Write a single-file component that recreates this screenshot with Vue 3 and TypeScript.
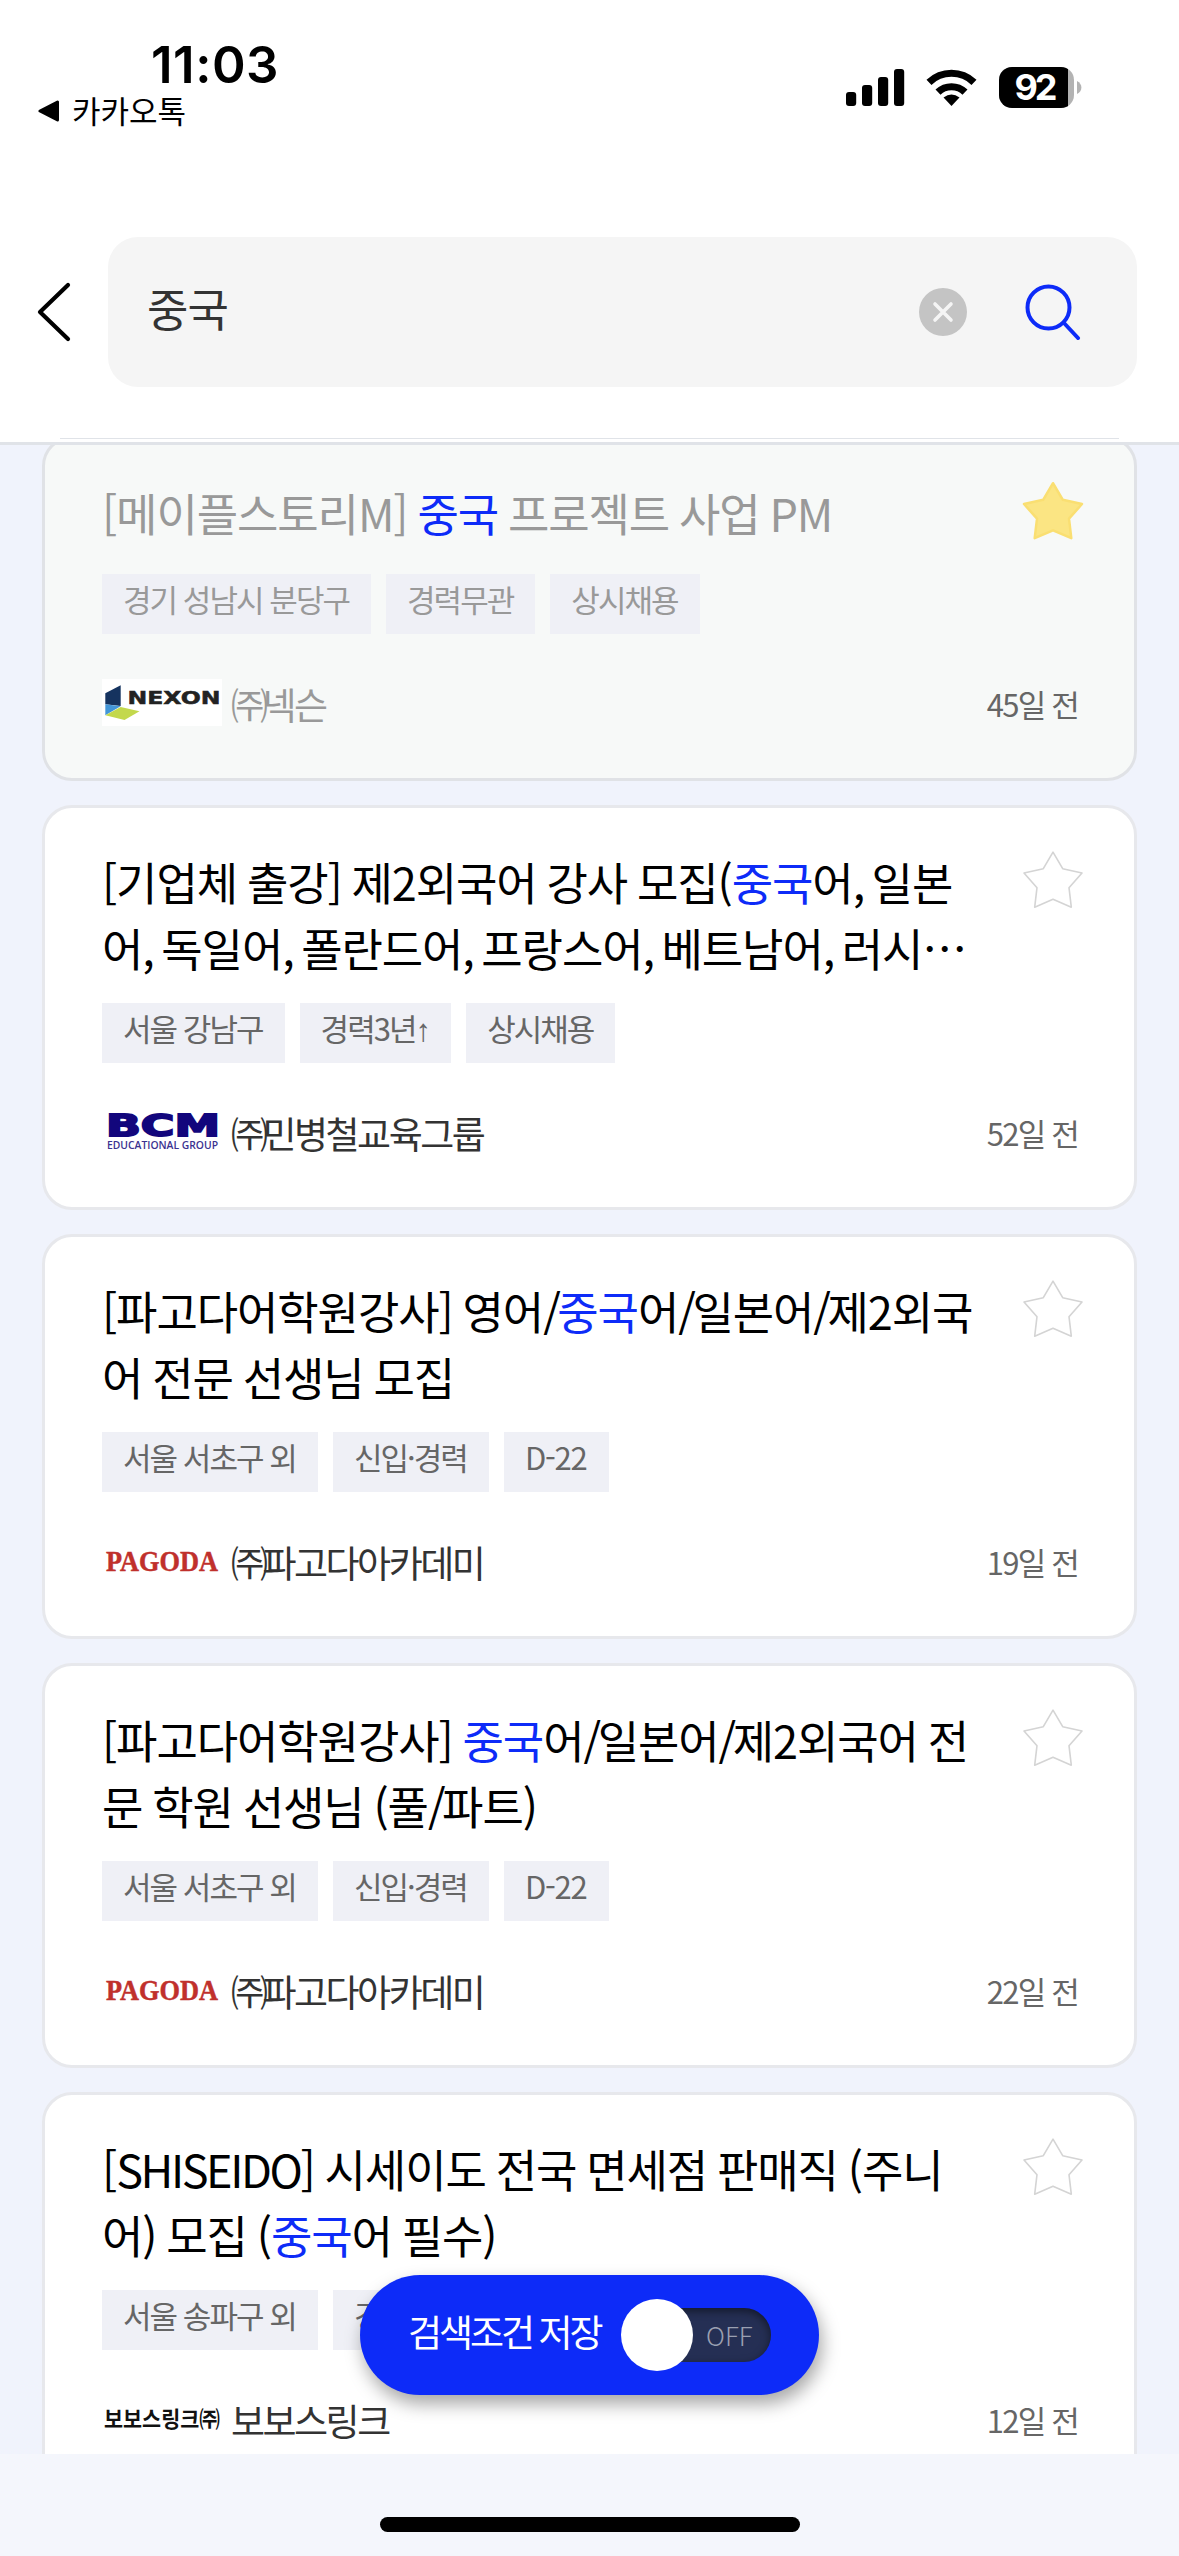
<script setup lang="ts">
interface Part {
  text: string
  hit?: boolean
}
interface Job {
  lines: Part[][]
  tags: string[]
  logo: 'nexon' | 'bcm' | 'pagoda' | 'bobos'
  company: string
  time: string
  viewed?: boolean
}
interface Run {
  text: string
  kind: string
}

const jobs: Job[] = [
  {
    lines: [[{ text: '[메이플스토리M] ' }, { text: '중국', hit: true }, { text: ' 프로젝트 사업 PM' }]],
    tags: ['경기 성남시 분당구', '경력무관', '상시채용'],
    logo: 'nexon',
    company: '㈜넥슨',
    time: '45일 전',
    viewed: true,
  },
  {
    lines: [
      [{ text: '[기업체 출강] 제2외국어 강사 모집(' }, { text: '중국', hit: true }, { text: '어, 일본' }],
      [{ text: '어, 독일어, 폴란드어, 프랑스어, 베트남어, 러시…' }],
    ],
    tags: ['서울 강남구', '경력3년↑', '상시채용'],
    logo: 'bcm',
    company: '㈜민병철교육그룹',
    time: '52일 전',
  },
  {
    lines: [
      [{ text: '[파고다어학원강사] 영어/' }, { text: '중국', hit: true }, { text: '어/일본어/제2외국' }],
      [{ text: '어 전문 선생님 모집' }],
    ],
    tags: ['서울 서초구 외', '신입·경력', 'D-22'],
    logo: 'pagoda',
    company: '㈜파고다아카데미',
    time: '19일 전',
  },
  {
    lines: [
      [{ text: '[파고다어학원강사] ' }, { text: '중국', hit: true }, { text: '어/일본어/제2외국어 전' }],
      [{ text: '문 학원 선생님 (풀/파트)' }],
    ],
    tags: ['서울 서초구 외', '신입·경력', 'D-22'],
    logo: 'pagoda',
    company: '㈜파고다아카데미',
    time: '22일 전',
  },
  {
    lines: [
      [{ text: '[SHISEIDO] 시세이도 전국 면세점 판매직 (주니' }],
      [{ text: '어) 모집 (' }, { text: '중국', hit: true }, { text: '어 필수)' }],
    ],
    tags: ['서울 송파구 외', '경력무관'],
    logo: 'bobos',
    company: '보보스링크',
    time: '12일 전',
  },
]

// Splits a text into runs so that Latin words and marks can be spaced apart from Hangul.
function runs(text: string): Run[] {
  return text
    .split(/([A-Z]{3,}|[,/]|↑|㈜|D-\d+)/)
    .filter((s) => s !== '')
    .map((s) => {
      let kind = ''
      if (/^[A-Z]{3,}$/.test(s)) kind = 'latin'
      else if (s === ',' || s === '/') kind = 'mark'
      else if (s === '↑') kind = 'arrow'
      else if (s === '㈜') kind = 'corp'
      else if (/^D-/.test(s)) kind = 'dday'
      return { text: s, kind }
    })
}
</script>

<template>
  <div class="screen" lang="ko">
    <header class="top">
      <div class="status">
        <div class="status-left">
          <div class="clock">11:03</div>
          <div class="return">
            <svg width="22" height="22" viewBox="0 0 22 22"><path d="M2 11 L19.5 2 V20 Z" stroke="#000" stroke-width="3" stroke-linejoin="round" /></svg>
            <span>카카오톡</span>
          </div>
        </div>
        <svg class="status-icons" width="236" height="42" viewBox="846 67 236 42">
          <rect x="846" y="92" width="10.2" height="14" rx="3" />
          <rect x="862" y="85" width="10.2" height="21" rx="3" />
          <rect x="878" y="77" width="10.2" height="29" rx="3" />
          <rect x="894" y="69" width="10.2" height="37" rx="3" />
          <path d="M951.5 106 L943.5 97.5 Q951.5 91.500 959.5 97.500 Z" />
          <path d="M938 92.200 A19.5 19.5 0 0 1 965 92.200" fill="none" stroke="#000" stroke-width="7.2" />
          <path d="M929 82.3 A32.5 32.5 0 0 1 974 82.3" fill="none" stroke="#000" stroke-width="7.2" />
          <clipPath id="bat"><rect x="999" y="67" width="75" height="41" rx="13" /></clipPath>
          <g clip-path="url(#bat)">
            <rect x="999" y="67" width="75" height="41" fill="#b3b3b3" />
            <rect x="999" y="67" width="69" height="41" />
          </g>
          <path d="M1077 81 Q1081.4 83.5 1081.4 87.5 Q1081.4 91.500 1077 94 Z" fill="#b3b3b3" />
          <text x="1036" y="100" text-anchor="middle" class="battery" textLength="43">92</text>
        </svg>
      </div>
      <div class="search-row">
        <svg class="back" width="40" height="66" viewBox="0 0 40 66"><path d="M34 6 L6 33 L34 60" fill="none" stroke="#000" stroke-width="4.200" stroke-linecap="round" stroke-linejoin="round" /></svg>
        <div class="search-box">
          <span class="query">중국</span>
          <svg class="clear" width="48" height="48" viewBox="0 0 48 48">
            <circle cx="24" cy="24" r="24" fill="#c4c4c4" />
            <path d="M16 16 L32 32 M32 16 L16 32" stroke="#f5f5f5" stroke-width="3.6" stroke-linecap="round" />
          </svg>
          <svg class="lens" width="56" height="56" viewBox="0 0 56 56" fill="none" stroke="#0d2bf8" stroke-width="4" stroke-linecap="round">
            <circle cx="23.500" cy="23.500" r="21" />
            <path d="M39 39 L53 54" />
          </svg>
        </div>
      </div>
    </header>

    <main class="list">
      <article v-for="(job, i) in jobs" :key="i" class="card" :class="{ viewed: job.viewed }">
        <div class="head">
          <h2 class="title">
            <span v-for="(line, l) in job.lines" :key="l" class="line"><span v-for="(p, k) in line" :key="k" :class="{ hit: p.hit }"><span v-for="(r, n) in runs(p.text)" :key="n" :class="r.kind">{{ r.text }}</span></span></span>
          </h2>
          <svg class="star" width="64" height="61" viewBox="-2 -2 64 61">
            <path d="M30 1.200 L39.700 17.700 L59 22 L46 36.700 L48.300 56.200 L30 48.300 L11.700 56.200 L14 36.700 L1 22 L20.300 17.700 Z" stroke-linejoin="round" />
          </svg>
        </div>
        <div class="tags">
          <span v-for="t in job.tags" :key="t" class="tag"><span v-for="(r, n) in runs(t)" :key="n" :class="r.kind">{{ r.text }}</span></span>
        </div>
        <div class="foot">
          <svg class="logo" width="120" height="47" viewBox="0 0 120 47">
            <g v-if="job.logo === 'nexon'">
              <rect width="120" height="47" fill="#fff" />
              <path d="M3.300 14.300 L18.700 6.300 V27 L3.300 25.300 Z" fill="#15335f" />
              <path d="M3.300 25.300 L18.700 27.300 L3.300 36.300 Z" fill="#4296d8" />
              <path d="M3.300 36.300 L18.700 28 L37.500 32.300 L22.500 41 Z" fill="#c3d84c" />
              <text x="25.500" y="25.200" textLength="93" lengthAdjust="spacingAndGlyphs" class="nexon">NEXON</text>
            </g>
            <g v-else-if="job.logo === 'bcm'">
              <text x="4" y="28" textLength="114" lengthAdjust="spacingAndGlyphs" class="bcm">BCM</text>
              <text x="5" y="41" textLength="111" lengthAdjust="spacingAndGlyphs" class="bcm-sub">EDUCATIONAL GROUP</text>
            </g>
            <text v-else-if="job.logo === 'pagoda'" x="4" y="33.500" textLength="112" lengthAdjust="spacingAndGlyphs" class="pagoda">PAGODA</text>
            <text v-else x="2" y="32" textLength="116" lengthAdjust="spacingAndGlyphs" class="bobos">보보스링크㈜</text>
          </svg>
          <span class="company"><span v-for="(r, n) in runs(job.company)" :key="n" :class="r.kind">{{ r.text }}</span></span>
          <span class="time">{{ job.time }}</span>
        </div>
      </article>
    </main>

    <footer class="bottom"><div class="home"></div></footer>

    <div class="save">
      <span class="save-label">검색조건 저장</span>
      <div class="toggle">
        <div class="knob"></div>
        <div class="track">OFF</div>
      </div>
    </div>
  </div>
</template>

<style>
body {
  background: #f4f6fc;
}
</style>

<style scoped>
.screen {
  position: relative;
  display: flex;
  flex-direction: column;
  width: 1179px;
  height: 2556px;
  overflow: hidden;
  background: #f0f3fc;
  font-family: "Noto Sans CJK KR", sans-serif;
}
.top {
  position: relative;
  z-index: 1;
  box-sizing: border-box;
  flex: none;
  height: 445px;
  background: #fff;
  border-bottom: 3px solid #e0e3e8;
}
.top::after {
  content: "";
  position: absolute;
  left: 60px;
  right: 60px;
  bottom: 3px;
  height: 1px;
  background: #e0e3e8;
}
.status {
  display: flex;
  justify-content: space-between;
  height: 237px;
}
.status-left {
  padding: 40px 0 0 38px;
}
.clock {
  padding-left: 113px;
  height: 50px;
  font: 600 51px/50px Inter, sans-serif;
  letter-spacing: 0.500px;
}
.return {
  display: flex;
  align-items: center;
  gap: 12px;
  height: 42px;
  font-size: 31px;
  font-weight: 400;
  line-height: 42px;
}
.return span {
  height: 45px;
}
.status-icons {
  margin: 67px 97px 0 0;
}
.battery {
  font: 700 36px Inter, sans-serif;
  fill: #fff;
}
.search-row {
  display: flex;
  align-items: center;
  height: 150px;
  padding: 0 42px 0 34px;
}
.back {
  flex: none;
  margin-right: 34px;
}
.search-box {
  display: flex;
  align-items: center;
  flex: 1;
  height: 150px;
  padding: 0 56px 0 39px;
  border-radius: 30px;
  background: #f5f5f5;
}
.query {
  flex: 1;
  height: 76px;
  font-size: 45px;
  line-height: 67px;
  letter-spacing: -1px;
  color: #333;
}
.clear {
  margin-right: 58px;
}
.list {
  display: flex;
  flex-direction: column;
  gap: 24px;
  flex: none;
  height: 2018px;
  margin-top: -9px;
  padding: 0 42px;
  overflow: hidden;
}
.card {
  box-sizing: border-box;
  flex: none;
  height: 405px;
  padding: 41px 50px 52px 57px;
  border: 3px solid #e7e8ec;
  border-radius: 30px;
  background: #fff;
}
.card.viewed {
  height: 345px;
  border-color: #e0e2e6;
  background: #f7f9f8;
}
.head {
  display: flex;
  justify-content: space-between;
  height: 154px;
}
.viewed .head {
  height: 94px;
}
.title {
  margin: 0;
  font-size: 45px;
  font-weight: 400;
  line-height: 66px;
  letter-spacing: -1.100px;
  word-spacing: -1.600px;
  color: #000;
}
.title .latin {
  letter-spacing: -2.400px;
}
.title .mark {
  letter-spacing: -3.500px;
}
.viewed .title {
  color: #999;
}
.line {
  display: block;
  white-space: pre;
}
.title .hit {
  color: #0d2bf8;
}
.star {
  flex: none;
  margin-right: -1px;
}
.star path {
  fill: #fff;
  stroke: #d4d4d4;
  stroke-width: 1.600;
}
.viewed .star path {
  fill: #fbe583;
  stroke: #fadf72;
  stroke-width: 2.500;
}
.tags {
  display: flex;
  gap: 15px;
}
.tag {
  box-sizing: border-box;
  height: 60px;
  padding: 0 22px 0 21px;
  background: #eff0f6;
  font-size: 31px;
  line-height: 49px;
  letter-spacing: -1.950px;
  white-space: pre;
  color: #666;
}
.tag .arrow {
  font-family: "Liberation Sans", sans-serif;
}
.tag .dday {
  letter-spacing: -1.200px;
}
.viewed .tag {
  color: #999;
}
.foot {
  display: flex;
  align-items: center;
  height: 47px;
  margin-top: 45px;
}
.logo {
  flex: none;
  overflow: visible;
}
.company {
  margin-left: 9px;
  padding-top: 2px;
  font-size: 37px;
  line-height: 54px;
  letter-spacing: -2.500px;
  color: #333;
}
.company .corp {
  letter-spacing: -5.500px;
}
.viewed .company {
  color: #999;
}
.time {
  margin-left: auto;
  margin-right: 6px;
  padding-top: 2px;
  font-size: 31px;
  line-height: 46px;
  letter-spacing: -1.800px;
  color: #666;
}
.nexon {
  font: 700 18.500px "DejaVu Sans", sans-serif;
  fill: #222;
  stroke: #222;
  stroke-width: 0.500;
}
.bcm {
  font: 700 30px "DejaVu Sans", sans-serif;
  fill: #12067c;
  stroke: #12067c;
  stroke-width: 1.800;
}
.bcm-sub {
  font: 600 10px "Open Sans", sans-serif;
  fill: #3b3290;
}
.pagoda {
  font: 700 30px "Liberation Serif", serif;
  fill: #c0302c;
  stroke: #c0302c;
  stroke-width: 0.500;
}
.bobos {
  font: 700 22px "Noto Sans CJK KR", sans-serif;
  fill: #111;
}
.bottom {
  flex: none;
  height: 102px;
  padding-top: 63px;
  box-sizing: border-box;
  background: #f4f6fc;
}
.home {
  width: 420px;
  height: 15px;
  margin: 0 auto;
  border-radius: 8px;
  background: #000;
}
.save {
  position: absolute;
  left: 360px;
  top: 2275px;
  z-index: 2;
  box-sizing: border-box;
  display: flex;
  align-items: center;
  width: 459px;
  height: 120px;
  padding: 0 48px 0 48px;
  border-radius: 60px;
  background: #0d2bf8;
  box-shadow: 3px 9px 18px rgba(0, 0, 0, 0.35);
}
.save-label {
  flex: 1;
  height: 60px;
  font-size: 37px;
  line-height: 53px;
  letter-spacing: -3px;
  word-spacing: -1px;
  white-space: nowrap;
  color: #fff;
}
.toggle {
  display: flex;
  align-items: center;
  width: 150px;
}
.knob {
  position: relative;
  z-index: 1;
  flex: none;
  width: 72px;
  height: 72px;
  border-radius: 50%;
  background: #fff;
}
.track {
  box-sizing: border-box;
  flex: none;
  width: 120px;
  height: 54px;
  margin-left: -42px;
  padding-left: 55px;
  border-radius: 27px;
  background: #252f54;
  box-shadow: inset 0 3px 9px rgba(0, 0, 0, 0.5);
  font-size: 26px;
  font-weight: 300;
  line-height: 54px;
  color: #9a9fb1;
}
</style>
